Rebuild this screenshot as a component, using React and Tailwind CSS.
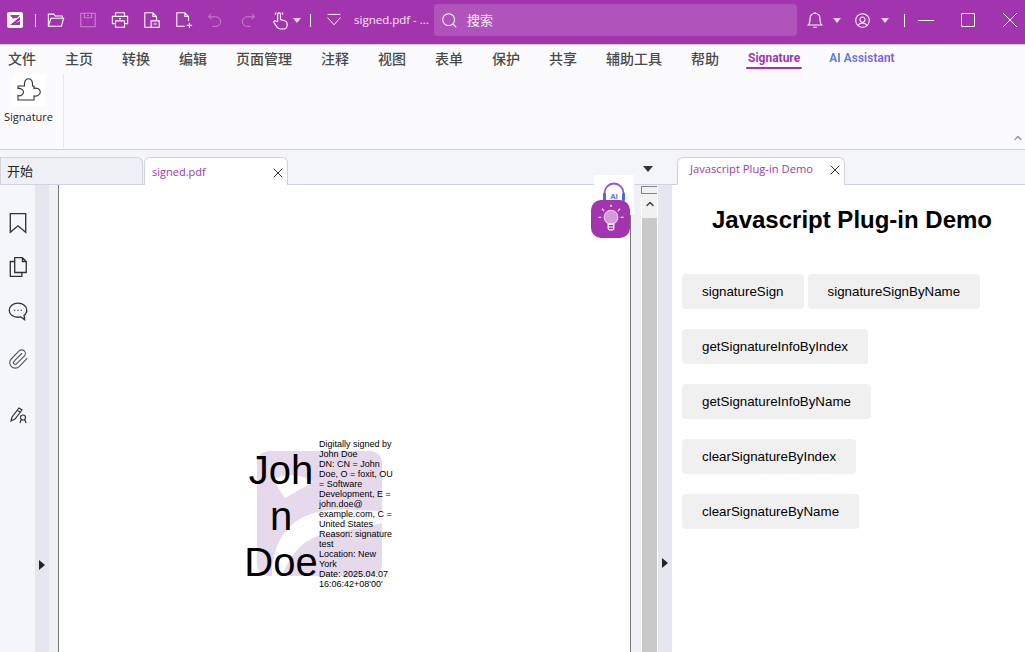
import React from "react";
import { X, ChevronUp, Paperclip } from "lucide-react";

const MENU = ["文件", "主页", "转换", "编辑", "页面管理", "注释", "视图", "表单", "保护", "共享", "辅助工具", "帮助"];
const BUTTONS = [
  ["signatureSign", "signatureSignByName"],
  ["getSignatureInfoByIndex"],
  ["getSignatureInfoByName"],
  ["clearSignatureByIndex"],
  ["clearSignatureByName"],
];

function Caret({ className = "" }) {
  return <span className={`w-0 h-0 border-x-[4px] border-x-transparent border-t-[5px] ${className}`} />;
}

function Divider({ className = "" }) {
  return <span className={`w-px h-[13px] bg-white ${className}`} />;
}

function Line({ d, className = "w-5 h-5", opacity = 1 }) {
  return (
    <svg viewBox="0 0 20 20" className={`shrink-0 ${className}`} fill="none" stroke="currentColor" strokeWidth="1.2" opacity={opacity}>
      <path d={d} />
    </svg>
  );
}

function TitleBar() {
  return (
    <div className="h-[44px] pb-[4px] bg-[#a235ad] flex items-center text-white font-['Noto_Sans',sans-serif] shrink-0">
      <div className="w-[16px] h-[16px] ml-[7px] bg-white rounded-[2px] flex items-center justify-center">
        <svg viewBox="0 0 16 16" className="w-[16px] h-[16px]" fill="#a235ad">
          <path d="M3 3h10l-3 3H7l-1 1zM13 5v3L6 13H3zM9 11l4-2v4H6z" />
        </svg>
      </div>
      <Divider className="ml-[12px]" />
      <Line className="w-[18px] h-[18px] ml-[11px]" d="M1.500 17V3.500h6l1.500 2h8V8M1.500 17h14.500l2.500-9H4.500z" />
      <Line className="w-[18px] h-[18px] ml-[14px]" opacity={0.4} d="M2 2.500h16v15H2zM6 2.500v5h8v-5M9 5h2" />
      <Line className="w-[18px] h-[18px] ml-[14px]" d="M5 6V2h10v4M5 14H1.500V6h17v8H15M5 11h10v7H5zM9 8.500h2" />
      <Line className="w-[18px] h-[18px] ml-[14px]" d="M9 18H2V2h9l4 4v4M11 2v4h4M9 11h9v7H9zM11.500 14.500h4" />
      <Line className="w-[18px] h-[18px] ml-[14px]" d="M11 17H2V2h9l4 4v5M11 2v4h4M16 13v6M13 16h6" />
      <Line className="w-[16px] h-[16px] ml-[14px]" opacity={0.4} d="M5 2L2 6l4 3M2 6h9a6 6 0 0 1 0 12H7" />
      <Line className="w-[16px] h-[16px] ml-[17px]" opacity={0.4} d="M15 2l3 4-4 3M18 6H9a6 6 0 0 0 0 12h4" />
      <Line className="w-[19px] h-[19px] ml-[15px]" d="M7 11V3.500a1.500 1.500 0 0 1 3 0V9l5 1.500c1.500.5 2 1.500 2 3V15c0 2-1.500 4-4 4H10c-2 0-3-1-4-2.500L3 12c-.5-1 1-2.500 2-1.500zM4.500 4a4 4 0 0 1 1-2.500M12.500 4a4 4 0 0 0-1-2.500" />
      <Caret className="ml-[3px] border-t-white/80" />
      <Divider className="ml-[9px]" />
      <Line className="w-[16px] h-[16px] ml-[15px]" d="M2 3h16M2 7l8 9 8-9" />
      <span className="ml-[12px] w-[80px] shrink-0 text-[11.5px] font-['Open_Sans',sans-serif] whitespace-nowrap text-white/90">signed.pdf - ...</span>
      <div className="w-[363px] h-[32px] shrink-0 rounded-[4px] bg-[#b053ba] flex items-center pl-[7px]">
        <Line className="w-[17px] h-[17px]" d="M9 2a7 7 0 1 0 0 14A7 7 0 0 0 9 2zM14 14l4 4" />
        <span className="ml-[9px] text-[13px] text-white/90 font-['Noto_Sans_CJK_SC',sans-serif]">搜索</span>
      </div>
      <Line className="w-[18px] h-[18px] ml-[9px]" d="M2.500 15.500c1.500-1.500 2-3 2-5.500V8a5.500 5.500 0 0 1 11 0v2c0 2.500.5 4 2 5.500zM8 18h4M10 1v1" />
      <Caret className="ml-[9px] border-t-white/80" />
      <Line className="w-[17px] h-[17px] ml-[13px]" d="M10 2a8 8 0 1 0 0 16a8 8 0 0 0 0-16zM10 6a3 3 0 1 0 0 6a3 3 0 0 0 0-6zM5 16c1-2 3-3 5-3s4 1 5 3" />
      <Caret className="ml-[10px] border-t-white/80" />
      <Divider className="ml-[15px]" />
      <span className="ml-[13px] w-[16px] h-px bg-white" />
      <span className="ml-[27px] w-[14px] h-[14px] border border-white rounded-[1px]" />
      <svg viewBox="0 0 14 14" className="ml-[28px] w-[14px] h-[14px]" fill="none" stroke="#fff" strokeWidth="1">
        <path d="M0 0L14 14M14 0L0 14" />
      </svg>
    </div>
  );
}

function Ribbon() {
  return (
    <div className="h-[106px] bg-[#fbfbfd] border-t border-[#cfd3e0] border-b relative shrink-0">
      <div className="h-[26px] pl-[8px] flex items-center gap-[29px] text-[14px] font-medium text-[#4a4a4a] font-['Noto_Sans_CJK_SC',sans-serif]">
        {MENU.map((m) => (
          <span key={m} className="whitespace-nowrap">{m}</span>
        ))}
        <span className="relative text-[#a235ad] font-['Roboto',sans-serif] font-bold text-[12px]">
          Signature
          <span className="absolute left-[-2px] right-[-2px] -bottom-[2px] h-[2px] rounded-full bg-[#a235ad]" />
        </span>
        <span className="text-[12px] font-['Roboto',sans-serif] font-bold bg-gradient-to-r from-[#4a7ff0] to-[#8a55e0] bg-clip-text text-transparent">
          AI Assistant
        </span>
      </div>
      <div className="flex h-[74px] mt-[3px]">
        <div className="w-[64px] border-r border-[#e8e9ef] flex flex-col items-center">
          <div className="w-[32px] h-[32px] ml-[-6px] bg-white flex items-center justify-center text-[#333]">
            <svg viewBox="0 0 24 24" className="w-[24px] h-[24px]" fill="none" stroke="currentColor" strokeWidth="1.1">
              <path d="M1 8H7.500C7 4 8.500 .7 11.500 .7S16 4 15.500 8H17V10.500C19 9.500 23.300 10.500 23.300 14S19 18.500 17 18V22H1V17.500C3 18.500 6.500 17 6.500 14S3 10 1 10.500z" />
            </svg>
          </div>
          <span className="mt-[3px] ml-[-6px] text-[11px] text-[#222] font-['Open_Sans',sans-serif]">Signature</span>
        </div>
      </div>
      <ChevronUp className="absolute right-[1px] bottom-[5px] w-[12px] h-[12px] text-[#999]" strokeWidth={3} />
    </div>
  );
}

function SideIcons() {
  return (
    <div className="w-[35px] bg-[#f5f6fa] flex flex-col items-center pt-[27px] text-[#333] shrink-0">
      <Line className="w-[22px] h-[22px]" d="M3 1.500h14v17l-7-6-7 6z" />
      <Line className="w-[22px] h-[22px] mt-[22px]" d="M7 15V1.500h7l3.500 3.500v10zM14 1.500V5h3.500M7 5H3v13.500h10.500V15" />
      <Line className="w-[22px] h-[22px] mt-[23px]" d="M10 2c4.500 0 8 2.700 8 6.500 0 2-1 3.500-2.500 4.500l.5 4-3.500-2.500c-.8.200-1.600.300-2.500.300-4.500 0-8-2.800-8-6.300S5.500 2 10 2zM6.500 8.500h1M9.500 8.500h1M12.500 8.500h1" />
      <Paperclip className="w-[22px] h-[22px] mt-[25px] text-[#555]" strokeWidth={1.2} />
      <Line className="w-[20px] h-[20px] mt-[34px]" d="M3 17l1-4 7-9 3 2-7 9zM9 6l3 2M15 11a2.500 2.500 0 1 0 0 5a2.500 2.500 0 0 0 0-5zM13 16l-1 3M17 16l1 3" />
    </div>
  );
}

function Collapse() {
  return (
    <div className="w-[14px] bg-[#e4e7f0] shrink-0 relative">
      <span className="absolute top-[375px] left-[4px] w-0 h-0 border-y-[5px] border-y-transparent border-l-[6px] border-l-[#222]" />
    </div>
  );
}

function DocArea() {
  return (
    <div className="flex-1 flex min-w-0 relative">
      <div className="w-[9px] bg-[#f0f1f5] shrink-0" />
      <div className="w-[573px] bg-white border-x border-[#777] shrink-0" />
      <div className="w-[10px] bg-[#f0f1f5] border-r border-white box-content shrink-0" />
      <div className="w-[15px] bg-[#f1f1f1] shrink-0 flex flex-col relative">
        <div className="h-[33px] flex items-end justify-center pb-[8px]">
          <ChevronUp className="w-[12px] h-[12px] text-[#444]" strokeWidth={3} />
        </div>
        <div className="flex-1 bg-[#c9c9c9]" />
        <div className="absolute top-[1px] -left-[1px] w-[17px] h-[8px] bg-[#f1f1f1] border border-[#7f8591]" />
      </div>
      {/* signature stamp */}
      <div className="absolute left-[208px] top-[254px] w-[150px] h-[150px] font-['Liberation_Sans',sans-serif] text-black">
        <svg viewBox="0 0 125 125" className="absolute left-0 top-[12px] w-[125px] h-[125px]">
          <rect width="125" height="125" rx="12" fill="#e7d9ec" />
          <path d="M16 29L28 47L56 31C48 25 30 20 16 29z" fill="#fff" />
          <path d="M15 125C15 100 25 69 61 61C80 56 105 60 125 60V72C100 78 75 82 61 85C45 90 33 104 25 125z" fill="#fff" />
        </svg>
        <div className="absolute -left-[13px] top-[8px] w-[74px] text-[40px] leading-[46px] text-center">Joh<br />n<br />Doe</div>
        <div className="absolute left-[62px] top-0 text-[9px] leading-[10px] whitespace-pre">
          {"Digitally signed by\nJohn Doe\nDN: CN = John\nDoe, O = foxit, OU\n= Software\nDevelopment, E =\njohn.doe@\nexample.com, C =\nUnited States\nReason: signature\ntest\nLocation: New\nYork\nDate: 2025.04.07\n16:06:42+08'00'"}
        </div>
      </div>
      {/* floating widgets */}
      <div className="absolute left-[545px] -top-[10px] w-[40px] h-[40px] bg-white flex justify-center pt-[7px]">
        <svg viewBox="0 0 24 24" className="w-[24px] h-[24px]" fill="none" strokeWidth="1.8">
          <path d="M2.500 14V11a9.500 9.500 0 0 1 19 0v3" stroke="#8a55e0" />
          <rect x="1" y="11" width="3" height="8" rx="1" fill="#3f6fe0" />
          <rect x="20" y="11" width="3" height="8" rx="1" fill="#3f6fe0" />
          <text x="12" y="17" textAnchor="middle" fontSize="8" fontWeight="700" fill="#4a7ff0" stroke="none" fontFamily="Roboto, sans-serif">AI</text>
        </svg>
      </div>
      <div className="absolute left-[542px] top-[15px] w-[39px] h-[38px] rounded-[10px] bg-[#a235ad] flex items-center justify-center">
        <svg viewBox="0 0 28 28" className="w-[32px] h-[32px]" fill="none" stroke="#fff" strokeWidth="1">
          <circle cx="14" cy="12.500" r="6" fill="#d29bd8" stroke="#e7c6ea" />
          <path d="M11.500 18.500h5v3.500a1.500 1.500 0 0 1-1.500 1.500h-2a1.500 1.500 0 0 1-1.500-1.500zM11.500 21h5M3 12.500h2.500M22.500 12.500h2.500M6 5l2 2M22 5l-2 2M14 1.500v2" />
        </svg>
      </div>
    </div>
  );
}

function RightPanel() {
  return (
    <div className="w-[368px] shrink-0 flex">
      <div className="w-[15px] bg-[#e4e7f0] border-l border-white shrink-0 relative">
        <span className="absolute top-[373px] left-[4px] w-0 h-0 border-y-[5px] border-y-transparent border-l-[6px] border-l-[#222]" />
      </div>
      <div className="flex-1 bg-white font-['Liberation_Sans',sans-serif] pl-[10px]">
        <h1 className="mt-[21px] text-[24px] leading-[28px] font-bold text-black text-center w-[340px] whitespace-nowrap">
          Javascript Plug-in Demo
        </h1>
        <div className="mt-[40px] flex flex-col gap-[20px]">
          {BUTTONS.map((row) => (
            <div key={row[0]} className="flex gap-[4px]">
              {row.map((b) => (
                <button key={b} className="h-[35px] px-[20px] rounded-[4px] bg-[#f0f0f0] text-[13.333px] text-black whitespace-nowrap">
                  {b}
                </button>
              ))}
            </div>
          ))}
        </div>
      </div>
    </div>
  );
}

export default function App() {
  return (
    <div className="w-[1025px] h-[652px] overflow-hidden flex flex-col bg-white">
      <TitleBar />
      <Ribbon />
      <div className="h-[35px] bg-[#f4f5f9] border-b border-[#cfd3e0] flex items-end relative shrink-0">
        <div className="w-[143px] h-[27px] bg-[#eff0f5] border border-b-0 border-[#cfd3e0] rounded-tr-[6px] pl-[6px] text-[13px] leading-[26px] text-[#222] font-['Noto_Sans_CJK_SC',sans-serif]">开始</div>
        <div className="ml-[1px] w-[144px] h-[28px] -mb-px bg-white border border-b-0 border-[#cfd3e0] rounded-t-[6px] pl-[7px] pt-[2px] flex items-center justify-between pr-[1px]">
          <span className="text-[11px] text-[#a235ad] font-['Open_Sans',sans-serif]">signed.pdf</span>
          <X className="w-[16px] h-[16px] text-[#333]" strokeWidth={1.5} />
        </div>
        <span className="absolute left-[643px] top-[16px] w-0 h-0 border-x-[5px] border-x-transparent border-t-[6px] border-t-[#333]" />
        <div className="absolute left-[677px] bottom-[-1px] w-[168px] h-[28px] bg-white border border-b-0 border-[#cfd3e0] rounded-t-[6px] flex items-center pl-[12px] pb-[4px] justify-between pr-[1px]">
          <span className="text-[11.2px] text-[#a235ad] font-['Open_Sans',sans-serif] whitespace-nowrap">Javascript Plug-in Demo</span>
          <X className="w-[16px] h-[16px] text-[#333]" strokeWidth={1.5} />
        </div>
      </div>
      <div className="flex-1 flex min-h-0">
        <SideIcons />
        <Collapse />
        <DocArea />
        <RightPanel />
      </div>
    </div>
  );
}
